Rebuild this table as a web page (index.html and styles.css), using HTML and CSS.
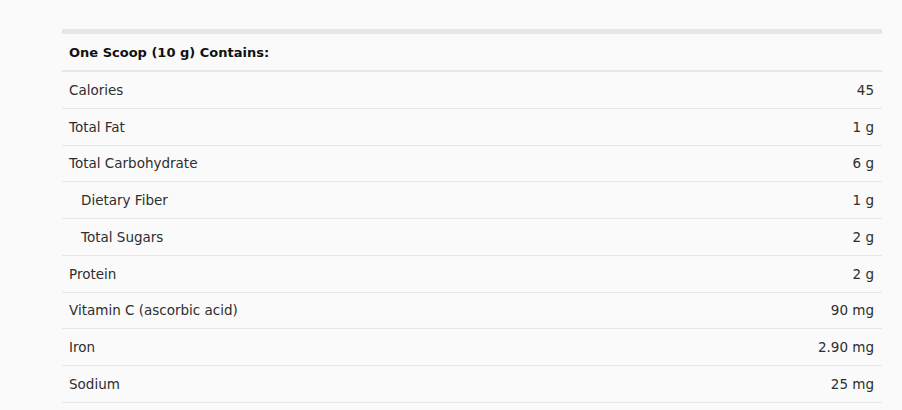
FILE: index.html
```html
<!DOCTYPE html>
<html>
<head>
<meta charset="utf-8">
<link rel="stylesheet" href="styles.css">
</head>
<body>
<div class="wrap">
  <table class="facts">
    <thead>
      <tr><th colspan="2">One Scoop (10 g) Contains:</th></tr>
    </thead>
    <tbody>
      <tr><td>Calories</td><td class="val">45</td></tr>
      <tr><td>Total Fat</td><td class="val">1 g</td></tr>
      <tr><td>Total Carbohydrate</td><td class="val">6 g</td></tr>
      <tr><td class="sub">Dietary Fiber</td><td class="val">1 g</td></tr>
      <tr><td class="sub">Total Sugars</td><td class="val">2 g</td></tr>
      <tr><td>Protein</td><td class="val">2 g</td></tr>
      <tr><td>Vitamin C (ascorbic acid)</td><td class="val">90 mg</td></tr>
      <tr><td>Iron</td><td class="val">2.90 mg</td></tr>
      <tr><td>Sodium</td><td class="val">25 mg</td></tr>
    </tbody>
  </table>
</div>
</body>
</html>
```
FILE: styles.css
```css
html, body {
  margin: 0;
  padding: 0;
  background: #fafafa;
}
.wrap {
  padding: 29px 20px 0 62px;
}
.facts {
  width: 820px;
  border-collapse: collapse;
  border-top: 5px solid #e6e6e9;
  font-family: "DejaVu Sans", sans-serif;
  font-size: 13.5px;
  color: #2e2e2e;
}
.facts th {
  text-align: left;
  font-weight: bold;
  font-size: 13px;
  color: #111;
  height: 36px;
  padding: 0 7px;
  border-bottom: 2px solid #e6e6e9;
  box-sizing: content-box;
}
.facts td {
  height: 35.75px;
  padding: 0 7px;
  border-bottom: 1px solid #e6e6e6;
  box-sizing: content-box;
}
.facts td.sub {
  padding-left: 19px;
}
.facts td.val {
  text-align: right;
  padding-right: 8px;
}
```
